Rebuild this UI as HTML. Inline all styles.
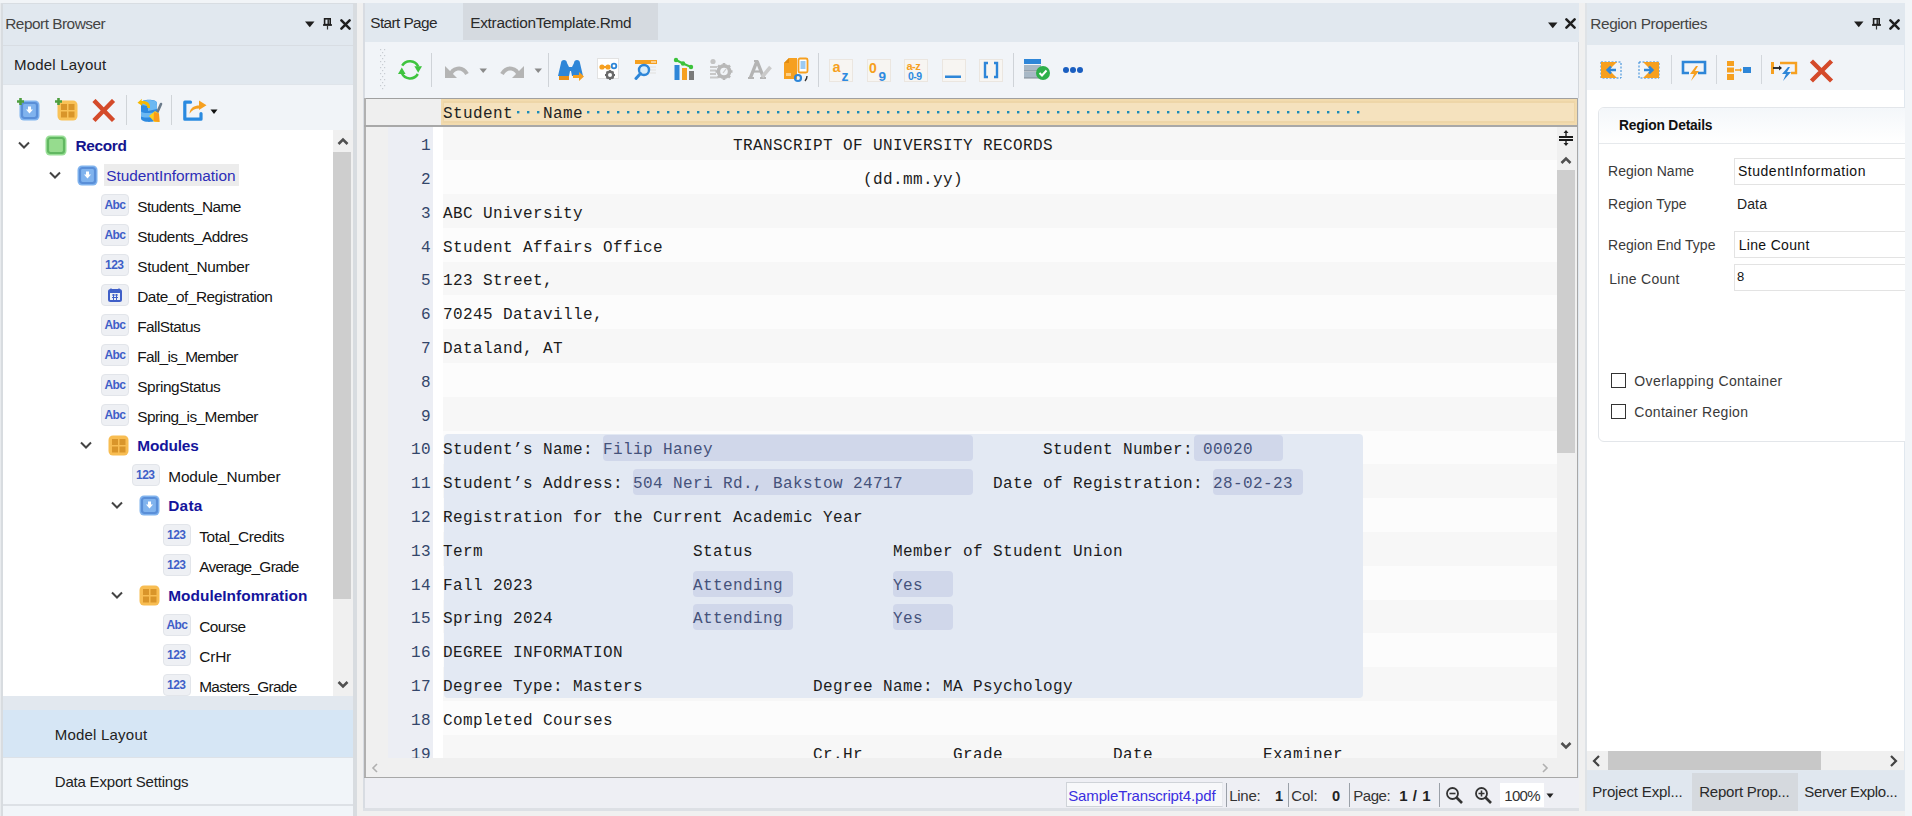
<!DOCTYPE html><html><head><meta charset="utf-8"><style>
html,body{margin:0;padding:0;}
body{width:1912px;height:816px;position:relative;overflow:hidden;background:#f0f0f0;font-family:"Liberation Sans", sans-serif;}
.t{position:absolute;white-space:pre;line-height:1;}
</style></head><body>
<div style="position:absolute;left:0px;top:0px;width:1912px;height:3px;background:#f1f4f7;"></div>
<div style="position:absolute;left:1905px;top:0px;width:7px;height:816px;background:#f2f5f8;"></div>
<div style="position:absolute;left:0px;top:3px;width:357px;height:813px;background:#e1e8ef;"></div>
<div style="position:absolute;left:0px;top:3px;width:1px;height:813px;background:#e8ebee;"></div>
<div style="position:absolute;left:1px;top:3px;width:2px;height:813px;background:#d8dce0;"></div>
<div style="position:absolute;left:1px;top:3px;width:356px;height:1px;background:#d8dde2;"></div>
<div class="t" style="left:5.23px;top:15.76px;font-size:15.4px;color:#444;font-weight:400;font-family:'Liberation Sans', sans-serif;letter-spacing:-0.495px;">Report Browser</div>
<svg style="position:absolute;left:305px;top:21px;" width="10" height="7" viewBox="0 0 10 7"><path d="M0 0.5 H9.5 L4.75 6.2Z" fill="#1e1e1e"/></svg>
<svg style="position:absolute;left:322.5px;top:17.5px;" width="10" height="12" viewBox="0 0 10 12"><rect x="1.6" y="0.8" width="5.6" height="5.8" fill="none" stroke="#1e1e1e" stroke-width="1.6"/><path d="M5.2 1.2 V6.5" stroke="#1e1e1e" stroke-width="1.4"/><path d="M0 7 H9" stroke="#1e1e1e" stroke-width="1.6"/><path d="M4.5 7.5 V11.5" stroke="#333" stroke-width="1.2"/></svg>
<svg style="position:absolute;left:340px;top:18.5px;" width="11" height="11" viewBox="0 0 11 11"><path d="M1.4 1.4 L9.6 9.6 M9.6 1.4 L1.4 9.6" stroke="#1e1e1e" stroke-width="2.5" stroke-linecap="round"/></svg>
<div style="position:absolute;left:3px;top:45px;width:350px;height:1px;background:#d8dde3;"></div>
<div class="t" style="left:13.95px;top:57.30px;font-size:15px;color:#222;font-weight:400;font-family:'Liberation Sans', sans-serif;letter-spacing:0.199px;">Model Layout</div>
<div style="position:absolute;left:3px;top:84px;width:350px;height:1px;background:#dfe4ea;"></div>
<div style="position:absolute;left:3px;top:85px;width:350px;height:45px;background:#f1f4f8;"></div>
<svg style="position:absolute;left:16px;top:97px;" width="26" height="26" viewBox="0 0 26 26">
<rect x="3.5" y="3.5" width="20" height="20" rx="4.5" fill="#80b3ee"/>
<rect x="6" y="6" width="15" height="15" rx="2.5" fill="#80b3ee" stroke="#5a8fd8" stroke-width="2.2"/>
<path d="M12 9.5 H15 V12.5 H17 L13.5 16.5 L10 12.5 H12Z" fill="#fff"/>
<path d="M4.5 1 V8 M1 4.5 H8" stroke="#4e9e3e" stroke-width="2.6"/>
</svg>
<svg style="position:absolute;left:54px;top:97px;" width="26" height="26" viewBox="0 0 26 26">
<rect x="3.5" y="3.5" width="20" height="20" rx="4.5" fill="#f9c258"/>
<rect x="7" y="7" width="6" height="6" fill="#d9952a"/><rect x="14.5" y="7" width="6" height="6" fill="#d9952a"/>
<rect x="7" y="14.5" width="6" height="6" fill="#d9952a"/><rect x="14.5" y="14.5" width="6" height="6" fill="#d9952a"/>
<path d="M4.5 1 V8 M1 4.5 H8" stroke="#4e9e3e" stroke-width="2.6"/>
</svg>
<svg style="position:absolute;left:92px;top:99px;" width="24" height="24" viewBox="0 0 24 24"><path d="M3.5 3 L20 20 M20 3 L3.5 20" stroke="#d44a2a" stroke-width="4.4" stroke-linecap="square"/></svg>
<div style="position:absolute;left:126px;top:95px;width:1px;height:30px;background:#d0d4d8;"></div>
<svg style="position:absolute;left:135px;top:98px;" width="28" height="26" viewBox="0 0 28 26">
<path d="M6 5 C6 0.5 22 0.5 22 5 V20.5 C22 25 6 25 6 20.5Z" fill="#2e8ae0"/>
<path d="M6 5 C6 9 22 9 22 5 C22 1 6 1 6 5Z" fill="#6cb8f2"/>
<path d="M13 7.5 L22 6 V11 L13 13Z M6 13.5 C9 15.5 13 15.5 22 14 V18 C13 20 9 20 6 18.5Z" fill="#6cb8f2"/>
<path d="M2.5 10 C2 5 6 2.5 11 3 L10.5 0.8 L15 4.8 L10 8 L10.5 5.8 C7 5.8 5 7.5 5.2 10Z" fill="#f5b800" transform="translate(17.5,0) scale(-1,1)"/>
<path d="M26 6 L22 15" stroke="#6a7a8a" stroke-width="2.6" stroke-linecap="round"/>
<path d="M14 18 L20 13 L24 15.5 L24.5 24 L19.5 24Z" fill="#fbd020"/><path d="M19 14 L24 15.5 L24.5 24 L18.5 23Z" fill="#f89a1c"/>
</svg>
<div style="position:absolute;left:171px;top:95px;width:1px;height:30px;background:#d0d4d8;"></div>
<svg style="position:absolute;left:182px;top:98px;" width="28" height="26" viewBox="0 0 28 26">
<path d="M8.5 4.2 H2.8 V21.2 H19 V15.5" stroke="#2a8ae0" stroke-width="3.2" fill="none" stroke-linejoin="round" stroke-linecap="round"/>
<path d="M7.5 15.8 C8 9.5 12.5 7.5 17 7.5 V2.5 L24.5 7.2 L17 12 V10.4 C13 10.4 9.8 12 7.5 15.8Z" fill="#f6a020"/>
</svg>
<svg style="position:absolute;left:210px;top:109px;" width="8" height="6" viewBox="0 0 8 6"><path d="M0.5 0.5 H7.5 L4 5Z" fill="#111"/></svg>
<div style="position:absolute;left:3px;top:130px;width:350px;height:566px;background:#ffffff;"></div>
<div style="position:absolute;left:333px;top:130px;width:20px;height:566px;background:#f0f0f0;"></div>
<div style="position:absolute;left:333px;top:152px;width:18px;height:447px;background:#cecece;"></div>
<svg style="position:absolute;left:336px;top:136px;" width="14" height="10" viewBox="0 0 14 10"><path d="M2.5 8 L7 3.5 L11.5 8" stroke="#505050" stroke-width="2.6" fill="none"/></svg>
<svg style="position:absolute;left:336px;top:680px;" width="14" height="10" viewBox="0 0 14 10"><path d="M2.5 2 L7 6.5 L11.5 2" stroke="#505050" stroke-width="2.6" fill="none"/></svg>
<div style="position:absolute;left:4px;top:130px;width:329px;height:566px;overflow:hidden">
<svg style="position:absolute;left:14px;top:11px;" width="12" height="8" viewBox="0 0 12 8"><path d="M1 1.5 L6 6.5 L11 1.5" stroke="#444" stroke-width="2" fill="none"/></svg>
<svg style="position:absolute;left:41px;top:5px;" width="22" height="21" viewBox="0 0 22 21"><rect x="0.5" y="0.5" width="21" height="20" rx="4.5" fill="#98de96"/><rect x="3" y="3" width="16" height="15" rx="2.5" fill="#96dc8e" stroke="#62b862" stroke-width="2.2"/></svg>
<div class="t" style="left:71.43px;top:8.36px;font-size:15.4px;color:#14148e;font-weight:700;font-family:'Liberation Sans', sans-serif;letter-spacing:-0.329px;">Record</div>
<svg style="position:absolute;left:45px;top:41px;" width="12" height="8" viewBox="0 0 12 8"><path d="M1 1.5 L6 6.5 L11 1.5" stroke="#444" stroke-width="2" fill="none"/></svg>
<svg style="position:absolute;left:73px;top:35px;" width="21" height="21" viewBox="0 0 21 21"><rect x="0.5" y="0.5" width="20" height="20" rx="4.5" fill="#80b3ee"/><rect x="3" y="3" width="15" height="15" rx="2.5" fill="#80b3ee" stroke="#5a8fd8" stroke-width="2.2"/><path d="M9 6.5 H12 V9.5 H14 L10.5 13.5 L7 9.5 H9Z" fill="#fff"/></svg>
<div style="position:absolute;left:100px;top:34px;width:135px;height:22px;background:#ececec;"></div>
<div class="t" style="left:102.23px;top:38.36px;font-size:15.4px;color:#2e2eb8;font-weight:400;font-family:'Liberation Sans', sans-serif;letter-spacing:-0.045px;">StudentInformation</div>
<div style="position:absolute;left:97px;top:64px;width:28px;height:22px;background:#eef0f4;border:1px solid #e2e5ea;border-radius:4px;box-sizing:border-box;"></div><div class="t" style="left:100.50px;top:69.34px;font-size:12px;color:#3f5fc8;font-weight:700;font-family:'Liberation Sans', sans-serif;letter-spacing:-0.6px">Abc</div>
<div class="t" style="left:133.23px;top:68.76px;font-size:15.4px;color:#141414;font-weight:400;font-family:'Liberation Sans', sans-serif;letter-spacing:-0.516px;">Students_Name</div>
<div style="position:absolute;left:97px;top:94px;width:28px;height:22px;background:#eef0f4;border:1px solid #e2e5ea;border-radius:4px;box-sizing:border-box;"></div><div class="t" style="left:100.50px;top:99.34px;font-size:12px;color:#3f5fc8;font-weight:700;font-family:'Liberation Sans', sans-serif;letter-spacing:-0.6px">Abc</div>
<div class="t" style="left:133.23px;top:98.76px;font-size:15.4px;color:#141414;font-weight:400;font-family:'Liberation Sans', sans-serif;letter-spacing:-0.507px;">Students_Addres</div>
<div style="position:absolute;left:97px;top:124px;width:28px;height:22px;background:#eef0f4;border:1px solid #e2e5ea;border-radius:4px;box-sizing:border-box;"></div><div class="t" style="left:101.00px;top:129.34px;font-size:12px;color:#3f5fc8;font-weight:700;font-family:'Liberation Sans', sans-serif;letter-spacing:-0.5px">123</div>
<div class="t" style="left:133.23px;top:128.76px;font-size:15.4px;color:#141414;font-weight:400;font-family:'Liberation Sans', sans-serif;letter-spacing:-0.306px;">Student_Number</div>
<div style="position:absolute;left:97px;top:154px;width:28px;height:22px;background:#eef0f4;border:1px solid #e2e5ea;border-radius:4px;box-sizing:border-box;"></div><svg style="position:absolute;left:104px;top:158px;" width="14" height="14" viewBox="0 0 14 14"><rect x="1" y="2" width="12" height="11" rx="1.5" fill="none" stroke="#3f5fc8" stroke-width="2"/><rect x="1" y="2" width="12" height="3" fill="#3f5fc8"/><path d="M3 0.5 V3 M11 0.5 V3" stroke="#3f5fc8" stroke-width="1.5"/><path d="M4 7 H10 M4 9.5 H10 M5.5 6 V12 M8.5 6 V12" stroke="#3f5fc8" stroke-width="1"/></svg>
<div class="t" style="left:133.23px;top:158.76px;font-size:15.4px;color:#141414;font-weight:400;font-family:'Liberation Sans', sans-serif;letter-spacing:-0.474px;">Date_of_Registration</div>
<div style="position:absolute;left:97px;top:184px;width:28px;height:22px;background:#eef0f4;border:1px solid #e2e5ea;border-radius:4px;box-sizing:border-box;"></div><div class="t" style="left:100.50px;top:189.34px;font-size:12px;color:#3f5fc8;font-weight:700;font-family:'Liberation Sans', sans-serif;letter-spacing:-0.6px">Abc</div>
<div class="t" style="left:133.23px;top:188.76px;font-size:15.4px;color:#141414;font-weight:400;font-family:'Liberation Sans', sans-serif;letter-spacing:-0.539px;">FallStatus</div>
<div style="position:absolute;left:97px;top:214px;width:28px;height:22px;background:#eef0f4;border:1px solid #e2e5ea;border-radius:4px;box-sizing:border-box;"></div><div class="t" style="left:100.50px;top:219.34px;font-size:12px;color:#3f5fc8;font-weight:700;font-family:'Liberation Sans', sans-serif;letter-spacing:-0.6px">Abc</div>
<div class="t" style="left:133.23px;top:218.76px;font-size:15.4px;color:#141414;font-weight:400;font-family:'Liberation Sans', sans-serif;letter-spacing:-0.638px;">Fall_is_Member</div>
<div style="position:absolute;left:97px;top:244px;width:28px;height:22px;background:#eef0f4;border:1px solid #e2e5ea;border-radius:4px;box-sizing:border-box;"></div><div class="t" style="left:100.50px;top:249.34px;font-size:12px;color:#3f5fc8;font-weight:700;font-family:'Liberation Sans', sans-serif;letter-spacing:-0.6px">Abc</div>
<div class="t" style="left:133.23px;top:248.76px;font-size:15.4px;color:#141414;font-weight:400;font-family:'Liberation Sans', sans-serif;letter-spacing:-0.413px;">SpringStatus</div>
<div style="position:absolute;left:97px;top:274px;width:28px;height:22px;background:#eef0f4;border:1px solid #e2e5ea;border-radius:4px;box-sizing:border-box;"></div><div class="t" style="left:100.50px;top:279.34px;font-size:12px;color:#3f5fc8;font-weight:700;font-family:'Liberation Sans', sans-serif;letter-spacing:-0.6px">Abc</div>
<div class="t" style="left:133.23px;top:278.76px;font-size:15.4px;color:#141414;font-weight:400;font-family:'Liberation Sans', sans-serif;letter-spacing:-0.532px;">Spring_is_Member</div>
<svg style="position:absolute;left:76px;top:311px;" width="12" height="8" viewBox="0 0 12 8"><path d="M1 1.5 L6 6.5 L11 1.5" stroke="#444" stroke-width="2" fill="none"/></svg>
<svg style="position:absolute;left:104px;top:305px;" width="21" height="21" viewBox="0 0 21 21"><rect x="0.5" y="0.5" width="20" height="20" rx="4.5" fill="#f8bd52"/><rect x="4" y="4" width="6" height="6" fill="#d9952a"/><rect x="11.5" y="4" width="6" height="6" fill="#d9952a"/><rect x="4" y="11.5" width="6" height="6" fill="#d9952a"/><rect x="11.5" y="11.5" width="6" height="6" fill="#d9952a"/></svg>
<div class="t" style="left:133.23px;top:308.36px;font-size:15.4px;color:#14149c;font-weight:700;font-family:'Liberation Sans', sans-serif;letter-spacing:-0.139px;">Modules</div>
<div style="position:absolute;left:128px;top:334px;width:28px;height:22px;background:#eef0f4;border:1px solid #e2e5ea;border-radius:4px;box-sizing:border-box;"></div><div class="t" style="left:132.00px;top:339.34px;font-size:12px;color:#3f5fc8;font-weight:700;font-family:'Liberation Sans', sans-serif;letter-spacing:-0.5px">123</div>
<div class="t" style="left:164.23px;top:338.76px;font-size:15.4px;color:#141414;font-weight:400;font-family:'Liberation Sans', sans-serif;letter-spacing:-0.116px;">Module_Number</div>
<svg style="position:absolute;left:107px;top:371px;" width="12" height="8" viewBox="0 0 12 8"><path d="M1 1.5 L6 6.5 L11 1.5" stroke="#444" stroke-width="2" fill="none"/></svg>
<svg style="position:absolute;left:135px;top:365px;" width="21" height="21" viewBox="0 0 21 21"><rect x="0.5" y="0.5" width="20" height="20" rx="4.5" fill="#80b3ee"/><rect x="3" y="3" width="15" height="15" rx="2.5" fill="#80b3ee" stroke="#5a8fd8" stroke-width="2.2"/><path d="M9 6.5 H12 V9.5 H14 L10.5 13.5 L7 9.5 H9Z" fill="#fff"/></svg>
<div class="t" style="left:164.23px;top:368.36px;font-size:15.4px;color:#14149c;font-weight:700;font-family:'Liberation Sans', sans-serif;letter-spacing:0.276px;">Data</div>
<div style="position:absolute;left:159px;top:394px;width:28px;height:22px;background:#eef0f4;border:1px solid #e2e5ea;border-radius:4px;box-sizing:border-box;"></div><div class="t" style="left:163.00px;top:399.34px;font-size:12px;color:#3f5fc8;font-weight:700;font-family:'Liberation Sans', sans-serif;letter-spacing:-0.5px">123</div>
<div class="t" style="left:195.23px;top:398.76px;font-size:15.4px;color:#141414;font-weight:400;font-family:'Liberation Sans', sans-serif;letter-spacing:-0.379px;">Total_Credits</div>
<div style="position:absolute;left:159px;top:424px;width:28px;height:22px;background:#eef0f4;border:1px solid #e2e5ea;border-radius:4px;box-sizing:border-box;"></div><div class="t" style="left:163.00px;top:429.34px;font-size:12px;color:#3f5fc8;font-weight:700;font-family:'Liberation Sans', sans-serif;letter-spacing:-0.5px">123</div>
<div class="t" style="left:195.23px;top:428.76px;font-size:15.4px;color:#141414;font-weight:400;font-family:'Liberation Sans', sans-serif;letter-spacing:-0.684px;">Average_Grade</div>
<svg style="position:absolute;left:107px;top:461px;" width="12" height="8" viewBox="0 0 12 8"><path d="M1 1.5 L6 6.5 L11 1.5" stroke="#444" stroke-width="2" fill="none"/></svg>
<svg style="position:absolute;left:135px;top:455px;" width="21" height="21" viewBox="0 0 21 21"><rect x="0.5" y="0.5" width="20" height="20" rx="4.5" fill="#f8bd52"/><rect x="4" y="4" width="6" height="6" fill="#d9952a"/><rect x="11.5" y="4" width="6" height="6" fill="#d9952a"/><rect x="4" y="11.5" width="6" height="6" fill="#d9952a"/><rect x="11.5" y="11.5" width="6" height="6" fill="#d9952a"/></svg>
<div class="t" style="left:164.23px;top:458.36px;font-size:15.4px;color:#14149c;font-weight:700;font-family:'Liberation Sans', sans-serif;letter-spacing:0.036px;">ModuleInfomration</div>
<div style="position:absolute;left:159px;top:484px;width:28px;height:22px;background:#eef0f4;border:1px solid #e2e5ea;border-radius:4px;box-sizing:border-box;"></div><div class="t" style="left:162.50px;top:489.34px;font-size:12px;color:#3f5fc8;font-weight:700;font-family:'Liberation Sans', sans-serif;letter-spacing:-0.6px">Abc</div>
<div class="t" style="left:195.23px;top:488.76px;font-size:15.4px;color:#141414;font-weight:400;font-family:'Liberation Sans', sans-serif;letter-spacing:-0.568px;">Course</div>
<div style="position:absolute;left:159px;top:514px;width:28px;height:22px;background:#eef0f4;border:1px solid #e2e5ea;border-radius:4px;box-sizing:border-box;"></div><div class="t" style="left:163.00px;top:519.34px;font-size:12px;color:#3f5fc8;font-weight:700;font-family:'Liberation Sans', sans-serif;letter-spacing:-0.5px">123</div>
<div class="t" style="left:195.23px;top:518.76px;font-size:15.4px;color:#141414;font-weight:400;font-family:'Liberation Sans', sans-serif;letter-spacing:-0.166px;">CrHr</div>
<div style="position:absolute;left:159px;top:544px;width:28px;height:22px;background:#eef0f4;border:1px solid #e2e5ea;border-radius:4px;box-sizing:border-box;"></div><div class="t" style="left:163.00px;top:549.34px;font-size:12px;color:#3f5fc8;font-weight:700;font-family:'Liberation Sans', sans-serif;letter-spacing:-0.5px">123</div>
<div class="t" style="left:195.23px;top:548.76px;font-size:15.4px;color:#141414;font-weight:400;font-family:'Liberation Sans', sans-serif;letter-spacing:-0.666px;">Masters_Grade</div>
</div>
<div style="position:absolute;left:3px;top:696px;width:350px;height:14px;background:#e2e8ef;"></div>
<div style="position:absolute;left:3px;top:710px;width:350px;height:47px;background:#d6e6f5;"></div>
<div class="t" style="left:54.75px;top:726.50px;font-size:15px;color:#222;font-weight:400;font-family:'Liberation Sans', sans-serif;letter-spacing:0.208px;">Model Layout</div>
<div style="position:absolute;left:3px;top:757px;width:350px;height:1px;background:#dde2e8;"></div>
<div style="position:absolute;left:3px;top:758px;width:350px;height:46px;background:#f1f5f9;"></div>
<div class="t" style="left:54.75px;top:774.10px;font-size:15px;color:#222;font-weight:400;font-family:'Liberation Sans', sans-serif;letter-spacing:-0.196px;">Data Export Settings</div>
<div style="position:absolute;left:3px;top:804px;width:350px;height:2px;background:#dde1e6;"></div>
<div style="position:absolute;left:3px;top:806px;width:350px;height:10px;background:#f1f5f9;"></div>
<div style="position:absolute;left:353px;top:3px;width:4px;height:813px;background:#d8dce0;"></div>
<div style="position:absolute;left:363px;top:3px;width:1216px;height:808px;background:#e1e8ef;"></div>
<div style="position:absolute;left:363px;top:3px;width:2px;height:808px;background:#d8dce2;"></div>
<div style="position:absolute;left:463px;top:3px;width:195px;height:37px;background:#d5dae0;"></div>
<div class="t" style="left:370.23px;top:14.76px;font-size:15.4px;color:#2a2a2a;font-weight:400;font-family:'Liberation Sans', sans-serif;letter-spacing:-0.594px;">Start Page</div>
<div class="t" style="left:470.23px;top:14.76px;font-size:15.4px;color:#2a2a2a;font-weight:400;font-family:'Liberation Sans', sans-serif;letter-spacing:-0.299px;">ExtractionTemplate.Rmd</div>
<svg style="position:absolute;left:1547.5px;top:21.5px;" width="10" height="7" viewBox="0 0 10 7"><path d="M0 0.5 H9.5 L4.75 6.2Z" fill="#1e1e1e"/></svg>
<svg style="position:absolute;left:1565px;top:17.5px;" width="11" height="11" viewBox="0 0 11 11"><path d="M1.4 1.4 L9.6 9.6 M9.6 1.4 L1.4 9.6" stroke="#1e1e1e" stroke-width="2.5" stroke-linecap="round"/></svg>
<div style="position:absolute;left:365px;top:42px;width:1213px;height:56px;background:#f1f4f8;"></div>
<div style="position:absolute;left:1578px;top:42px;width:1px;height:56px;background:#d3d7dc;"></div>
<svg style="position:absolute;left:379px;top:49px;" width="8" height="42" viewBox="0 0 8 42"><rect x="1" y="0" width="1.2" height="1.2" fill="#c8ccd2"/><rect x="5" y="0" width="1.2" height="1.2" fill="#c8ccd2"/><rect x="3" y="3" width="1.2" height="1.2" fill="#c8ccd2"/><rect x="1" y="6" width="1.2" height="1.2" fill="#c8ccd2"/><rect x="5" y="6" width="1.2" height="1.2" fill="#c8ccd2"/><rect x="3" y="9" width="1.2" height="1.2" fill="#c8ccd2"/><rect x="1" y="12" width="1.2" height="1.2" fill="#c8ccd2"/><rect x="5" y="12" width="1.2" height="1.2" fill="#c8ccd2"/><rect x="3" y="15" width="1.2" height="1.2" fill="#c8ccd2"/><rect x="1" y="18" width="1.2" height="1.2" fill="#c8ccd2"/><rect x="5" y="18" width="1.2" height="1.2" fill="#c8ccd2"/><rect x="3" y="21" width="1.2" height="1.2" fill="#c8ccd2"/><rect x="1" y="24" width="1.2" height="1.2" fill="#c8ccd2"/><rect x="5" y="24" width="1.2" height="1.2" fill="#c8ccd2"/><rect x="3" y="27" width="1.2" height="1.2" fill="#c8ccd2"/><rect x="1" y="30" width="1.2" height="1.2" fill="#c8ccd2"/><rect x="5" y="30" width="1.2" height="1.2" fill="#c8ccd2"/><rect x="3" y="33" width="1.2" height="1.2" fill="#c8ccd2"/><rect x="1" y="36" width="1.2" height="1.2" fill="#c8ccd2"/><rect x="5" y="36" width="1.2" height="1.2" fill="#c8ccd2"/><rect x="3" y="39" width="1.2" height="1.2" fill="#c8ccd2"/></svg>
<svg style="position:absolute;left:392px;top:52px;" width="40" height="36" viewBox="0 0 40 36">
<path d="M10.2 13.6 A9 9 0 0 1 26.2 14.6" stroke="#3ec43e" stroke-width="2.5" fill="none"/>
<path d="M22.4 14.2 L30 14.2 L26.2 20.8Z" fill="#3ec43e"/>
<path d="M25.8 22 A9 9 0 0 1 9.8 21" stroke="#3ec43e" stroke-width="2.5" fill="none"/>
<path d="M6 22 L13.6 22 L9.8 15.4Z" fill="#3ec43e"/>
</svg>
<div style="position:absolute;left:431px;top:53px;width:1px;height:34px;background:#cfd3d8;"></div>
<svg style="position:absolute;left:444px;top:62px;" width="26" height="18" viewBox="0 0 26 18"><path d="M6 14 C8 6 18 3 23 12" stroke="#b4b4b4" stroke-width="4" fill="none"/><path d="M1 4 V16 H13Z" fill="#b4b4b4"/></svg>
<svg style="position:absolute;left:479px;top:68px;" width="9" height="6" viewBox="0 0 9 6"><path d="M0.5 0.5 H8 L4.2 5Z" fill="#8a8a8a"/></svg>
<svg style="position:absolute;left:499px;top:62px;" width="26" height="18" viewBox="0 0 26 18"><path d="M20 14 C18 6 8 3 3 12" stroke="#b4b4b4" stroke-width="4" fill="none"/><path d="M25 4 V16 H13Z" fill="#b4b4b4"/></svg>
<svg style="position:absolute;left:534px;top:68px;" width="9" height="6" viewBox="0 0 9 6"><path d="M0.5 0.5 H8 L4.2 5Z" fill="#8a8a8a"/></svg>
<div style="position:absolute;left:548px;top:53px;width:1px;height:34px;background:#cfd3d8;"></div>
<svg style="position:absolute;left:558px;top:57px;" width="28" height="25" viewBox="0 0 28 25">
<path d="M3 6 C3 2 9 2 9 6 L11 10 H14 L16 6 C16 2 22 2 22 6 L25 19 H14 L13 14 H12 L11 19 H0Z" fill="#2e86d8"/>
<rect x="1" y="19" width="10" height="4" fill="#e8901a"/>
<path d="M15 18 H21 V15 L26 19.5 L21 24 V21 H15Z" fill="#f6a020"/>
</svg>
<svg style="position:absolute;left:597px;top:58px;" width="24" height="24" viewBox="0 0 24 24">
<rect x="0.5" y="0.5" width="21" height="20" fill="#fff" stroke="#e2e2e2"/>
<circle cx="5" cy="9" r="2.6" fill="#f6a020"/><circle cx="11" cy="9" r="2.6" fill="#f6a020"/><path d="M5 9 H11" stroke="#f6a020" stroke-width="2"/>
<circle cx="17" cy="8" r="2.3" fill="none" stroke="#2e86d8" stroke-width="1.8"/>
<circle cx="13" cy="17" r="3.2" fill="none" stroke="#6a6a6a" stroke-width="2.4"/>
<path d="M13 12 V13.5 M13 20.5 V22 M8 17 H9.5 M16.5 17 H18 M9.5 13.5 L10.5 14.5 M15.5 19.5 L16.5 20.5 M16.5 13.5 L15.5 14.5 M9.5 20.5 L10.5 19.5" stroke="#6a6a6a" stroke-width="1.8"/>
</svg>
<svg style="position:absolute;left:634px;top:58px;" width="26" height="24" viewBox="0 0 26 24">
<rect x="1" y="2" width="22" height="4" fill="#f6a020"/>
<path d="M17 4 H22" stroke="#fff" stroke-width="1"/>
<path d="M13 9 H22 M15 12 H22 M15 15 H22" stroke="#e6e6e6" stroke-width="1.5"/>
<circle cx="10" cy="12" r="5" fill="#d8ecfa" stroke="#2e86d8" stroke-width="2.4"/>
<path d="M6.5 15.5 L2 20.5" stroke="#2e86d8" stroke-width="3" stroke-linecap="round"/>
</svg>
<svg style="position:absolute;left:673px;top:57px;" width="24" height="25" viewBox="0 0 24 25">
<rect x="1.5" y="8" width="5" height="15" fill="#2e86d8"/>
<rect x="9" y="11" width="5" height="12" fill="#f6a020"/>
<rect x="16" y="14" width="5" height="9" fill="#7a7a7a"/>
<path d="M3 3 L10 6.5 L18 10" stroke="#3cc23c" stroke-width="2" fill="none"/>
<circle cx="3" cy="3" r="2.2" fill="#3cc23c"/><circle cx="10" cy="6.5" r="2.2" fill="#3cc23c"/><circle cx="18" cy="10" r="2.2" fill="#3cc23c"/>
</svg>
<svg style="position:absolute;left:708px;top:57px;" width="26" height="25" viewBox="0 0 26 25">
<circle cx="5" cy="4.5" r="2.6" fill="#c4c4c4"/>
<path d="M2 10 H9 M2 13.5 H8 M2 17 H8 M2 20.5 H10" stroke="#c8c8c8" stroke-width="2"/>
<circle cx="16" cy="14.5" r="5.6" fill="none" stroke="#b8b8b8" stroke-width="3.6"/>
<path d="M16 6 V9 M16 20 V23 M7.5 14.5 H10.5 M21.5 14.5 H24.5 M10 8.5 L12 10.5 M20 18.5 L22 20.5 M22 8.5 L20 10.5 M10 20.5 L12 18.5" stroke="#b8b8b8" stroke-width="2.6"/>
<path d="M15 16 L18 12" stroke="#c8c8c8" stroke-width="1.2"/>
</svg>
<svg style="position:absolute;left:747px;top:58px;" width="28" height="24" viewBox="0 0 28 24">
<path d="M3.5 19.5 L10 3 L16.5 19.5" stroke="#b4b4b4" stroke-width="3.4" fill="none" stroke-linejoin="bevel"/>
<path d="M6.5 13.5 H13.5" stroke="#b4b4b4" stroke-width="2.2"/>
<path d="M1 20 H7 M13 20 H19 M7 3 H11" stroke="#b4b4b4" stroke-width="2"/>
<path d="M15 19 L23.5 9" stroke="#cacaca" stroke-width="3.6"/>
</svg>
<svg style="position:absolute;left:783px;top:57px;" width="28" height="26" viewBox="0 0 28 26">
<path d="M6 1 H14 V22 H1 V6Z" fill="#f6a020"/>
<path d="M1 6 L6 1 V6Z" fill="#e08a10"/>
<rect x="3" y="16" width="5" height="3" fill="#fbd08a"/>
<rect x="15.5" y="1.5" width="9" height="14" rx="1.5" fill="#fff" stroke="#f6a020" stroke-width="1.8"/>
<rect x="17.5" y="4" width="5" height="8" fill="#9ccaf2"/>
<circle cx="15" cy="21" r="3" fill="none" stroke="#2e86d8" stroke-width="2.2"/>
<path d="M22 24 C24 22 24 20 24 19" stroke="#333" stroke-width="1.4" fill="none"/>
</svg>
<div style="position:absolute;left:818px;top:53px;width:1px;height:34px;background:#cfd3d8;"></div>
<svg style="position:absolute;left:829px;top:59px;" width="24" height="23" viewBox="0 0 24 23"><rect x="0.5" y="0.5" width="23" height="22" fill="#f7f5f2" stroke="#ebe6e0"/><text x="3.5" y="13" font-family="Liberation Sans" font-weight="700" font-size="14.5" fill="#f6a020">a</text><text x="12.5" y="21.5" font-family="Liberation Sans" font-weight="700" font-size="14" fill="#2e8ae0">z</text></svg>
<svg style="position:absolute;left:867px;top:59px;" width="24" height="23" viewBox="0 0 24 23"><rect x="0.5" y="0.5" width="23" height="22" fill="#f7f5f2" stroke="#ebe6e0"/><text x="2" y="14" font-family="Liberation Sans" font-weight="700" font-size="14" fill="#f6a020">0</text><text x="11.5" y="22" font-family="Liberation Sans" font-weight="700" font-size="13.5" fill="#2e8ae0">9</text></svg>
<svg style="position:absolute;left:904px;top:59px;" width="24" height="23" viewBox="0 0 24 23"><rect x="0.5" y="0.5" width="23" height="22" fill="#f7f5f2" stroke="#ebe6e0"/><text x="2.5" y="11" font-family="Liberation Sans" font-weight="700" font-size="11" fill="#f6a020" letter-spacing="-0.5">a-z</text><text x="4" y="21" font-family="Liberation Sans" font-weight="700" font-size="10.5" fill="#2e8ae0" letter-spacing="-0.6">0-9</text></svg>
<svg style="position:absolute;left:942px;top:59px;" width="24" height="23" viewBox="0 0 24 23"><rect x="0.5" y="0.5" width="23" height="22" fill="#f7f5f2" stroke="#ebe6e0"/><rect x="3" y="16.5" width="16" height="2.5" fill="#2e86d8"/></svg>
<svg style="position:absolute;left:979px;top:59px;" width="24" height="23" viewBox="0 0 24 23"><rect x="0.5" y="0.5" width="23" height="22" fill="#f7f5f2" stroke="#ebe6e0"/><path d="M9 4 H6 V18 H9 M15 4 H18 V18 H15" stroke="#2e86d8" stroke-width="2.4" fill="none"/></svg>
<div style="position:absolute;left:1013px;top:53px;width:1px;height:34px;background:#cfd3d8;"></div>
<svg style="position:absolute;left:1023px;top:58px;" width="28" height="24" viewBox="0 0 28 24">
<rect x="1" y="1" width="17" height="5" fill="#2e86d8"/>
<rect x="1" y="7" width="17" height="6" fill="#a8b8c6"/>
<rect x="1" y="14" width="17" height="6" fill="#a8b8c6"/>
<path d="M1 13 H18 M1 20 H18" stroke="#808a94" stroke-width="1"/>
<circle cx="20" cy="15" r="7" fill="#2eb04a"/>
<path d="M16.5 15 L19 17.5 L23.5 12.5" stroke="#fff" stroke-width="2" fill="none"/>
</svg>
<svg style="position:absolute;left:1062px;top:66px;" width="24" height="8" viewBox="0 0 24 8"><circle cx="4" cy="4" r="3" fill="#1a5ec0"/><circle cx="11" cy="4" r="3" fill="#1a5ec0"/><circle cx="18" cy="4" r="3" fill="#1a5ec0"/></svg>
<div style="position:absolute;left:364px;top:98px;width:1214px;height:1px;background:#a0a0a0;"></div>
<div style="position:absolute;left:364px;top:98px;width:2px;height:680px;background:#b0b0b0;"></div>
<div style="position:absolute;left:366px;top:99px;width:1211px;height:27px;background:#efefef;"></div>
<div style="position:absolute;left:441px;top:99px;width:1136px;height:26px;background:#f2dbae;"></div>
<div style="position:absolute;left:443px;top:101px;width:1132px;height:22px;background:#eed6a8;"></div>
<div style="position:absolute;left:444px;top:103px;width:1130px;height:18px;background:#f5e2be;"></div>
<div style="position:absolute;left:364px;top:125px;width:1214px;height:2px;background:#a8a8a8;"></div>
<div class="t" style="left:443.00px;top:105.74px;font-size:16px;color:#222;font-weight:400;font-family:'Liberation Mono', monospace;letter-spacing:0.4px">Student</div>
<svg style="position:absolute;left:443px;top:111px;" width="920" height="3" viewBox="0 0 920 3"><rect x="74" y="0" width="2.4" height="2.4" fill="#1c8cb8"/><rect x="84" y="0" width="2.4" height="2.4" fill="#1c8cb8"/><rect x="94" y="0" width="2.4" height="2.4" fill="#1c8cb8"/><rect x="144" y="0" width="2.4" height="2.4" fill="#1c8cb8"/><rect x="154" y="0" width="2.4" height="2.4" fill="#1c8cb8"/><rect x="164" y="0" width="2.4" height="2.4" fill="#1c8cb8"/><rect x="174" y="0" width="2.4" height="2.4" fill="#1c8cb8"/><rect x="184" y="0" width="2.4" height="2.4" fill="#1c8cb8"/><rect x="194" y="0" width="2.4" height="2.4" fill="#1c8cb8"/><rect x="204" y="0" width="2.4" height="2.4" fill="#1c8cb8"/><rect x="214" y="0" width="2.4" height="2.4" fill="#1c8cb8"/><rect x="224" y="0" width="2.4" height="2.4" fill="#1c8cb8"/><rect x="234" y="0" width="2.4" height="2.4" fill="#1c8cb8"/><rect x="244" y="0" width="2.4" height="2.4" fill="#1c8cb8"/><rect x="254" y="0" width="2.4" height="2.4" fill="#1c8cb8"/><rect x="264" y="0" width="2.4" height="2.4" fill="#1c8cb8"/><rect x="274" y="0" width="2.4" height="2.4" fill="#1c8cb8"/><rect x="284" y="0" width="2.4" height="2.4" fill="#1c8cb8"/><rect x="294" y="0" width="2.4" height="2.4" fill="#1c8cb8"/><rect x="304" y="0" width="2.4" height="2.4" fill="#1c8cb8"/><rect x="314" y="0" width="2.4" height="2.4" fill="#1c8cb8"/><rect x="324" y="0" width="2.4" height="2.4" fill="#1c8cb8"/><rect x="334" y="0" width="2.4" height="2.4" fill="#1c8cb8"/><rect x="344" y="0" width="2.4" height="2.4" fill="#1c8cb8"/><rect x="354" y="0" width="2.4" height="2.4" fill="#1c8cb8"/><rect x="364" y="0" width="2.4" height="2.4" fill="#1c8cb8"/><rect x="374" y="0" width="2.4" height="2.4" fill="#1c8cb8"/><rect x="384" y="0" width="2.4" height="2.4" fill="#1c8cb8"/><rect x="394" y="0" width="2.4" height="2.4" fill="#1c8cb8"/><rect x="404" y="0" width="2.4" height="2.4" fill="#1c8cb8"/><rect x="414" y="0" width="2.4" height="2.4" fill="#1c8cb8"/><rect x="424" y="0" width="2.4" height="2.4" fill="#1c8cb8"/><rect x="434" y="0" width="2.4" height="2.4" fill="#1c8cb8"/><rect x="444" y="0" width="2.4" height="2.4" fill="#1c8cb8"/><rect x="454" y="0" width="2.4" height="2.4" fill="#1c8cb8"/><rect x="464" y="0" width="2.4" height="2.4" fill="#1c8cb8"/><rect x="474" y="0" width="2.4" height="2.4" fill="#1c8cb8"/><rect x="484" y="0" width="2.4" height="2.4" fill="#1c8cb8"/><rect x="494" y="0" width="2.4" height="2.4" fill="#1c8cb8"/><rect x="504" y="0" width="2.4" height="2.4" fill="#1c8cb8"/><rect x="514" y="0" width="2.4" height="2.4" fill="#1c8cb8"/><rect x="524" y="0" width="2.4" height="2.4" fill="#1c8cb8"/><rect x="534" y="0" width="2.4" height="2.4" fill="#1c8cb8"/><rect x="544" y="0" width="2.4" height="2.4" fill="#1c8cb8"/><rect x="554" y="0" width="2.4" height="2.4" fill="#1c8cb8"/><rect x="564" y="0" width="2.4" height="2.4" fill="#1c8cb8"/><rect x="574" y="0" width="2.4" height="2.4" fill="#1c8cb8"/><rect x="584" y="0" width="2.4" height="2.4" fill="#1c8cb8"/><rect x="594" y="0" width="2.4" height="2.4" fill="#1c8cb8"/><rect x="604" y="0" width="2.4" height="2.4" fill="#1c8cb8"/><rect x="614" y="0" width="2.4" height="2.4" fill="#1c8cb8"/><rect x="624" y="0" width="2.4" height="2.4" fill="#1c8cb8"/><rect x="634" y="0" width="2.4" height="2.4" fill="#1c8cb8"/><rect x="644" y="0" width="2.4" height="2.4" fill="#1c8cb8"/><rect x="654" y="0" width="2.4" height="2.4" fill="#1c8cb8"/><rect x="664" y="0" width="2.4" height="2.4" fill="#1c8cb8"/><rect x="674" y="0" width="2.4" height="2.4" fill="#1c8cb8"/><rect x="684" y="0" width="2.4" height="2.4" fill="#1c8cb8"/><rect x="694" y="0" width="2.4" height="2.4" fill="#1c8cb8"/><rect x="704" y="0" width="2.4" height="2.4" fill="#1c8cb8"/><rect x="714" y="0" width="2.4" height="2.4" fill="#1c8cb8"/><rect x="724" y="0" width="2.4" height="2.4" fill="#1c8cb8"/><rect x="734" y="0" width="2.4" height="2.4" fill="#1c8cb8"/><rect x="744" y="0" width="2.4" height="2.4" fill="#1c8cb8"/><rect x="754" y="0" width="2.4" height="2.4" fill="#1c8cb8"/><rect x="764" y="0" width="2.4" height="2.4" fill="#1c8cb8"/><rect x="774" y="0" width="2.4" height="2.4" fill="#1c8cb8"/><rect x="784" y="0" width="2.4" height="2.4" fill="#1c8cb8"/><rect x="794" y="0" width="2.4" height="2.4" fill="#1c8cb8"/><rect x="804" y="0" width="2.4" height="2.4" fill="#1c8cb8"/><rect x="814" y="0" width="2.4" height="2.4" fill="#1c8cb8"/><rect x="824" y="0" width="2.4" height="2.4" fill="#1c8cb8"/><rect x="834" y="0" width="2.4" height="2.4" fill="#1c8cb8"/><rect x="844" y="0" width="2.4" height="2.4" fill="#1c8cb8"/><rect x="854" y="0" width="2.4" height="2.4" fill="#1c8cb8"/><rect x="864" y="0" width="2.4" height="2.4" fill="#1c8cb8"/><rect x="874" y="0" width="2.4" height="2.4" fill="#1c8cb8"/><rect x="884" y="0" width="2.4" height="2.4" fill="#1c8cb8"/><rect x="894" y="0" width="2.4" height="2.4" fill="#1c8cb8"/><rect x="904" y="0" width="2.4" height="2.4" fill="#1c8cb8"/><rect x="914" y="0" width="2.4" height="2.4" fill="#1c8cb8"/></svg>
<div class="t" style="left:543.00px;top:105.74px;font-size:16px;color:#222;font-weight:400;font-family:'Liberation Mono', monospace;letter-spacing:0.4px">Name</div>
<div style="position:absolute;left:366px;top:127px;width:1191px;height:631px;background:#fcfcfc;"></div>
<div style="position:absolute;left:366px;top:127px;width:22px;height:631px;background:#f0f0f0;"></div>
<div style="position:absolute;left:388px;top:127px;width:45px;height:631px;background:#eceef4;"></div>
<div style="position:absolute;left:433px;top:127px;width:10px;height:631px;background:#ffffff;"></div>
<div style="position:absolute;left:443px;top:127px;width:1114px;height:33px;background:#f7f7f7;"></div>
<div style="position:absolute;left:443px;top:194px;width:1114px;height:34px;background:#f7f7f7;"></div>
<div style="position:absolute;left:443px;top:262px;width:1114px;height:33px;background:#f7f7f7;"></div>
<div style="position:absolute;left:443px;top:329px;width:1114px;height:34px;background:#f7f7f7;"></div>
<div style="position:absolute;left:443px;top:397px;width:1114px;height:34px;background:#f7f7f7;"></div>
<div style="position:absolute;left:443px;top:464px;width:1114px;height:34px;background:#f7f7f7;"></div>
<div style="position:absolute;left:443px;top:532px;width:1114px;height:34px;background:#f7f7f7;"></div>
<div style="position:absolute;left:443px;top:600px;width:1114px;height:33px;background:#f7f7f7;"></div>
<div style="position:absolute;left:443px;top:667px;width:1114px;height:34px;background:#f7f7f7;"></div>
<div style="position:absolute;left:443px;top:735px;width:1114px;height:23px;background:#f7f7f7;"></div>
<div style="position:absolute;left:443.5px;top:434px;width:919.5px;height:264px;background:#e3e9f3;border-radius:4px;"></div>
<div style="position:absolute;left:603px;top:435px;width:370px;height:26px;background:#d0d7ea;border-radius:4px;"></div>
<div style="position:absolute;left:1194px;top:435px;width:89px;height:26px;background:#d0d7ea;border-radius:4px;"></div>
<div style="position:absolute;left:633px;top:469px;width:340px;height:26px;background:#d0d7ea;border-radius:4px;"></div>
<div style="position:absolute;left:1213px;top:469px;width:90px;height:26px;background:#d0d7ea;border-radius:4px;"></div>
<div style="position:absolute;left:693px;top:571px;width:100px;height:26px;background:#d0d7ea;border-radius:4px;"></div>
<div style="position:absolute;left:893px;top:571px;width:60px;height:26px;background:#d0d7ea;border-radius:4px;"></div>
<div style="position:absolute;left:693px;top:604px;width:100px;height:26px;background:#d0d7ea;border-radius:4px;"></div>
<div style="position:absolute;left:893px;top:604px;width:60px;height:26px;background:#d0d7ea;border-radius:4px;"></div>
<div style="position:absolute;left:365px;top:127px;width:1192px;height:631px;overflow:hidden">
<div class="t" style="left:56.00px;top:11.14px;font-size:16px;color:#34466a;font-weight:400;font-family:'Liberation Mono', monospace;letter-spacing:0.4px">1</div>
<div class="t" style="left:368.00px;top:11.14px;font-size:16px;color:#1c1c1c;font-weight:400;font-family:'Liberation Mono', monospace;letter-spacing:0.4px">TRANSCRIPT OF UNIVERSITY RECORDS</div>
<div class="t" style="left:56.00px;top:44.94px;font-size:16px;color:#34466a;font-weight:400;font-family:'Liberation Mono', monospace;letter-spacing:0.4px">2</div>
<div class="t" style="left:498.00px;top:44.94px;font-size:16px;color:#1c1c1c;font-weight:400;font-family:'Liberation Mono', monospace;letter-spacing:0.4px">(dd.mm.yy)</div>
<div class="t" style="left:56.00px;top:78.74px;font-size:16px;color:#34466a;font-weight:400;font-family:'Liberation Mono', monospace;letter-spacing:0.4px">3</div>
<div class="t" style="left:78.00px;top:78.74px;font-size:16px;color:#1c1c1c;font-weight:400;font-family:'Liberation Mono', monospace;letter-spacing:0.4px">ABC University</div>
<div class="t" style="left:56.00px;top:112.54px;font-size:16px;color:#34466a;font-weight:400;font-family:'Liberation Mono', monospace;letter-spacing:0.4px">4</div>
<div class="t" style="left:78.00px;top:112.54px;font-size:16px;color:#1c1c1c;font-weight:400;font-family:'Liberation Mono', monospace;letter-spacing:0.4px">Student Affairs Office</div>
<div class="t" style="left:56.00px;top:146.34px;font-size:16px;color:#34466a;font-weight:400;font-family:'Liberation Mono', monospace;letter-spacing:0.4px">5</div>
<div class="t" style="left:78.00px;top:146.34px;font-size:16px;color:#1c1c1c;font-weight:400;font-family:'Liberation Mono', monospace;letter-spacing:0.4px">123 Street,</div>
<div class="t" style="left:56.00px;top:180.14px;font-size:16px;color:#34466a;font-weight:400;font-family:'Liberation Mono', monospace;letter-spacing:0.4px">6</div>
<div class="t" style="left:78.00px;top:180.14px;font-size:16px;color:#1c1c1c;font-weight:400;font-family:'Liberation Mono', monospace;letter-spacing:0.4px">70245 Dataville,</div>
<div class="t" style="left:56.00px;top:213.94px;font-size:16px;color:#34466a;font-weight:400;font-family:'Liberation Mono', monospace;letter-spacing:0.4px">7</div>
<div class="t" style="left:78.00px;top:213.94px;font-size:16px;color:#1c1c1c;font-weight:400;font-family:'Liberation Mono', monospace;letter-spacing:0.4px">Dataland, AT</div>
<div class="t" style="left:56.00px;top:247.74px;font-size:16px;color:#34466a;font-weight:400;font-family:'Liberation Mono', monospace;letter-spacing:0.4px">8</div>
<div class="t" style="left:56.00px;top:281.54px;font-size:16px;color:#34466a;font-weight:400;font-family:'Liberation Mono', monospace;letter-spacing:0.4px">9</div>
<div class="t" style="left:46.00px;top:315.34px;font-size:16px;color:#34466a;font-weight:400;font-family:'Liberation Mono', monospace;letter-spacing:0.4px">10</div>
<div class="t" style="left:78.00px;top:315.34px;font-size:16px;color:#1c1c1c;font-weight:400;font-family:'Liberation Mono', monospace;letter-spacing:0.4px">Student’s Name:</div>
<div class="t" style="left:238.00px;top:315.34px;font-size:16px;color:#45527a;font-weight:400;font-family:'Liberation Mono', monospace;letter-spacing:0.4px">Filip Haney</div>
<div class="t" style="left:678.00px;top:315.34px;font-size:16px;color:#1c1c1c;font-weight:400;font-family:'Liberation Mono', monospace;letter-spacing:0.4px">Student Number:</div>
<div class="t" style="left:838.00px;top:315.34px;font-size:16px;color:#45527a;font-weight:400;font-family:'Liberation Mono', monospace;letter-spacing:0.4px">00020</div>
<div class="t" style="left:46.00px;top:349.14px;font-size:16px;color:#34466a;font-weight:400;font-family:'Liberation Mono', monospace;letter-spacing:0.4px">11</div>
<div class="t" style="left:78.00px;top:349.14px;font-size:16px;color:#1c1c1c;font-weight:400;font-family:'Liberation Mono', monospace;letter-spacing:0.4px">Student’s Address:</div>
<div class="t" style="left:268.00px;top:349.14px;font-size:16px;color:#45527a;font-weight:400;font-family:'Liberation Mono', monospace;letter-spacing:0.4px">504 Neri Rd., Bakstow 24717</div>
<div class="t" style="left:628.00px;top:349.14px;font-size:16px;color:#1c1c1c;font-weight:400;font-family:'Liberation Mono', monospace;letter-spacing:0.4px">Date of Registration:</div>
<div class="t" style="left:848.00px;top:349.14px;font-size:16px;color:#45527a;font-weight:400;font-family:'Liberation Mono', monospace;letter-spacing:0.4px">28-02-23</div>
<div class="t" style="left:46.00px;top:382.94px;font-size:16px;color:#34466a;font-weight:400;font-family:'Liberation Mono', monospace;letter-spacing:0.4px">12</div>
<div class="t" style="left:78.00px;top:382.94px;font-size:16px;color:#1c1c1c;font-weight:400;font-family:'Liberation Mono', monospace;letter-spacing:0.4px">Registration for the Current Academic Year</div>
<div class="t" style="left:46.00px;top:416.74px;font-size:16px;color:#34466a;font-weight:400;font-family:'Liberation Mono', monospace;letter-spacing:0.4px">13</div>
<div class="t" style="left:78.00px;top:416.74px;font-size:16px;color:#1c1c1c;font-weight:400;font-family:'Liberation Mono', monospace;letter-spacing:0.4px">Term</div>
<div class="t" style="left:328.00px;top:416.74px;font-size:16px;color:#1c1c1c;font-weight:400;font-family:'Liberation Mono', monospace;letter-spacing:0.4px">Status</div>
<div class="t" style="left:528.00px;top:416.74px;font-size:16px;color:#1c1c1c;font-weight:400;font-family:'Liberation Mono', monospace;letter-spacing:0.4px">Member of Student Union</div>
<div class="t" style="left:46.00px;top:450.54px;font-size:16px;color:#34466a;font-weight:400;font-family:'Liberation Mono', monospace;letter-spacing:0.4px">14</div>
<div class="t" style="left:78.00px;top:450.54px;font-size:16px;color:#1c1c1c;font-weight:400;font-family:'Liberation Mono', monospace;letter-spacing:0.4px">Fall 2023</div>
<div class="t" style="left:328.00px;top:450.54px;font-size:16px;color:#45527a;font-weight:400;font-family:'Liberation Mono', monospace;letter-spacing:0.4px">Attending</div>
<div class="t" style="left:528.00px;top:450.54px;font-size:16px;color:#45527a;font-weight:400;font-family:'Liberation Mono', monospace;letter-spacing:0.4px">Yes</div>
<div class="t" style="left:46.00px;top:484.34px;font-size:16px;color:#34466a;font-weight:400;font-family:'Liberation Mono', monospace;letter-spacing:0.4px">15</div>
<div class="t" style="left:78.00px;top:484.34px;font-size:16px;color:#1c1c1c;font-weight:400;font-family:'Liberation Mono', monospace;letter-spacing:0.4px">Spring 2024</div>
<div class="t" style="left:328.00px;top:484.34px;font-size:16px;color:#45527a;font-weight:400;font-family:'Liberation Mono', monospace;letter-spacing:0.4px">Attending</div>
<div class="t" style="left:528.00px;top:484.34px;font-size:16px;color:#45527a;font-weight:400;font-family:'Liberation Mono', monospace;letter-spacing:0.4px">Yes</div>
<div class="t" style="left:46.00px;top:518.14px;font-size:16px;color:#34466a;font-weight:400;font-family:'Liberation Mono', monospace;letter-spacing:0.4px">16</div>
<div class="t" style="left:78.00px;top:518.14px;font-size:16px;color:#1c1c1c;font-weight:400;font-family:'Liberation Mono', monospace;letter-spacing:0.4px">DEGREE INFORMATION</div>
<div class="t" style="left:46.00px;top:551.94px;font-size:16px;color:#34466a;font-weight:400;font-family:'Liberation Mono', monospace;letter-spacing:0.4px">17</div>
<div class="t" style="left:78.00px;top:551.94px;font-size:16px;color:#1c1c1c;font-weight:400;font-family:'Liberation Mono', monospace;letter-spacing:0.4px">Degree Type: Masters</div>
<div class="t" style="left:448.00px;top:551.94px;font-size:16px;color:#1c1c1c;font-weight:400;font-family:'Liberation Mono', monospace;letter-spacing:0.4px">Degree Name: MA Psychology</div>
<div class="t" style="left:46.00px;top:585.74px;font-size:16px;color:#34466a;font-weight:400;font-family:'Liberation Mono', monospace;letter-spacing:0.4px">18</div>
<div class="t" style="left:78.00px;top:585.74px;font-size:16px;color:#1c1c1c;font-weight:400;font-family:'Liberation Mono', monospace;letter-spacing:0.4px">Completed Courses</div>
<div class="t" style="left:46.00px;top:619.54px;font-size:16px;color:#34466a;font-weight:400;font-family:'Liberation Mono', monospace;letter-spacing:0.4px">19</div>
<div class="t" style="left:448.00px;top:619.54px;font-size:16px;color:#1c1c1c;font-weight:400;font-family:'Liberation Mono', monospace;letter-spacing:0.4px">Cr.Hr</div>
<div class="t" style="left:588.00px;top:619.54px;font-size:16px;color:#1c1c1c;font-weight:400;font-family:'Liberation Mono', monospace;letter-spacing:0.4px">Grade</div>
<div class="t" style="left:748.00px;top:619.54px;font-size:16px;color:#1c1c1c;font-weight:400;font-family:'Liberation Mono', monospace;letter-spacing:0.4px">Date</div>
<div class="t" style="left:898.00px;top:619.54px;font-size:16px;color:#1c1c1c;font-weight:400;font-family:'Liberation Mono', monospace;letter-spacing:0.4px">Examiner</div>
</div>
<div style="position:absolute;left:1557px;top:127px;width:20px;height:631px;background:#f0f0f0;"></div>
<svg style="position:absolute;left:1558px;top:129px;" width="16" height="18" viewBox="0 0 16 18"><path d="M1 8 H15 M1 11 H15" stroke="#1a1a1a" stroke-width="1.8"/><path d="M8 2 V7 M8 12 V16" stroke="#222" stroke-width="1.4"/><path d="M5.5 4 L8 1 L10.5 4Z M5.5 14 L8 17 L10.5 14Z" fill="#222"/></svg>
<svg style="position:absolute;left:1559px;top:155px;" width="14" height="10" viewBox="0 0 14 10"><path d="M2.5 8 L7 3.5 L11.5 8" stroke="#505050" stroke-width="2.6" fill="none"/></svg>
<div style="position:absolute;left:1557px;top:170px;width:18px;height:283px;background:#cecece;"></div>
<svg style="position:absolute;left:1559px;top:741px;" width="14" height="10" viewBox="0 0 14 10"><path d="M2.5 2 L7 6.5 L11.5 2" stroke="#505050" stroke-width="2.6" fill="none"/></svg>
<div style="position:absolute;left:366px;top:758px;width:1211px;height:19px;background:#f0f0f0;"></div>
<svg style="position:absolute;left:370px;top:762px;" width="10" height="12" viewBox="0 0 10 12"><path d="M7 2 L3 6 L7 10" stroke="#b0b0b0" stroke-width="1.6" fill="none"/></svg>
<svg style="position:absolute;left:1540px;top:762px;" width="10" height="12" viewBox="0 0 10 12"><path d="M3 2 L7 6 L3 10" stroke="#b0b0b0" stroke-width="1.6" fill="none"/></svg>
<div style="position:absolute;left:364px;top:777px;width:1214px;height:1px;background:#a8a8a8;"></div>
<div style="position:absolute;left:1577px;top:98px;width:1px;height:680px;background:#a8a8a8;"></div>
<div style="position:absolute;left:365px;top:778px;width:1214px;height:30px;background:#eeeff4;"></div>
<div style="position:absolute;left:363px;top:808px;width:1216px;height:3px;background:#dde0e5;"></div>
<div style="position:absolute;left:1066px;top:782px;width:157px;height:25px;background:#f7f8fa;border:1px solid #cfd3d8;border-right-color:#e8eaee;box-sizing:border-box;"></div>
<div class="t" style="left:1068.25px;top:788.30px;font-size:15px;color:#3a2ee0;font-weight:400;font-family:'Liberation Sans', sans-serif;letter-spacing:-0.150px;">SampleTranscript4.pdf</div>
<div style="position:absolute;left:1226px;top:783px;width:1px;height:24px;background:#9aa0a8;"></div>
<div class="t" style="left:1229.25px;top:788.30px;font-size:15px;color:#333;font-weight:400;font-family:'Liberation Sans', sans-serif;letter-spacing:-0.295px;">Line:</div>
<div class="t" style="left:1275.00px;top:788.64px;font-size:14.6px;color:#222;font-weight:700;font-family:'Liberation Sans', sans-serif;">1</div>
<div style="position:absolute;left:1288px;top:783px;width:1px;height:24px;background:#9aa0a8;"></div>
<div class="t" style="left:1291.25px;top:788.30px;font-size:15px;color:#333;font-weight:400;font-family:'Liberation Sans', sans-serif;letter-spacing:-0.112px;">Col:</div>
<div class="t" style="left:1332.00px;top:788.64px;font-size:14.6px;color:#222;font-weight:700;font-family:'Liberation Sans', sans-serif;">0</div>
<div style="position:absolute;left:1349px;top:783px;width:1px;height:24px;background:#9aa0a8;"></div>
<div class="t" style="left:1353.25px;top:788.30px;font-size:15px;color:#333;font-weight:400;font-family:'Liberation Sans', sans-serif;letter-spacing:-0.463px;">Page:</div>
<div class="t" style="left:1399.25px;top:788.30px;font-size:15px;color:#222;font-weight:700;font-family:'Liberation Sans', sans-serif;letter-spacing:0.541px;">1 / 1</div>
<div style="position:absolute;left:1439px;top:783px;width:1px;height:24px;background:#9aa0a8;"></div>
<svg style="position:absolute;left:1445px;top:786px;" width="20" height="20" viewBox="0 0 20 20"><circle cx="7.5" cy="7.5" r="5.5" fill="none" stroke="#333" stroke-width="1.8"/><path d="M11.5 11.5 L17 17" stroke="#333" stroke-width="2.6"/><path d="M4.5 7.5 H10.5" stroke="#333" stroke-width="1.6"/></svg>
<svg style="position:absolute;left:1474px;top:786px;" width="20" height="20" viewBox="0 0 20 20"><circle cx="7.5" cy="7.5" r="5.5" fill="none" stroke="#333" stroke-width="1.8"/><path d="M11.5 11.5 L17 17" stroke="#333" stroke-width="2.6"/><path d="M4.5 7.5 H10.5 M7.5 4.5 V10.5" stroke="#333" stroke-width="1.6"/></svg>
<div style="position:absolute;left:1500px;top:783px;width:44px;height:24px;background:#ffffff;"></div>
<div class="t" style="left:1504.25px;top:788.30px;font-size:15px;color:#333;font-weight:400;font-family:'Liberation Sans', sans-serif;letter-spacing:-0.675px;">100%</div>
<svg style="position:absolute;left:1546px;top:793px;" width="8" height="6" viewBox="0 0 8 6"><path d="M0.5 0.5 H7.5 L4 5Z" fill="#222"/></svg>
<div style="position:absolute;left:1585px;top:3px;width:320px;height:808px;background:#e1e8ef;"></div>
<div style="position:absolute;left:1585px;top:3px;width:2px;height:808px;background:#dfe3e7;"></div>
<div class="t" style="left:1590.23px;top:15.76px;font-size:15.4px;color:#444;font-weight:400;font-family:'Liberation Sans', sans-serif;letter-spacing:-0.376px;">Region Properties</div>
<svg style="position:absolute;left:1854px;top:21px;" width="10" height="7" viewBox="0 0 10 7"><path d="M0 0.5 H9.5 L4.75 6.2Z" fill="#1e1e1e"/></svg>
<svg style="position:absolute;left:1872px;top:17.5px;" width="10" height="12" viewBox="0 0 10 12"><rect x="1.6" y="0.8" width="5.6" height="5.8" fill="none" stroke="#1e1e1e" stroke-width="1.6"/><path d="M5.2 1.2 V6.5" stroke="#1e1e1e" stroke-width="1.4"/><path d="M0 7 H9" stroke="#1e1e1e" stroke-width="1.6"/><path d="M4.5 7.5 V11.5" stroke="#333" stroke-width="1.2"/></svg>
<svg style="position:absolute;left:1889px;top:18.5px;" width="11" height="11" viewBox="0 0 11 11"><path d="M1.4 1.4 L9.6 9.6 M9.6 1.4 L1.4 9.6" stroke="#1e1e1e" stroke-width="2.5" stroke-linecap="round"/></svg>
<div style="position:absolute;left:1587px;top:45px;width:317px;height:45px;background:#f1f4f8;"></div>
<svg style="position:absolute;left:1599px;top:60px;" width="24" height="20" viewBox="0 0 24 20">
<path d="M2 2 H22 V18 H2Z" fill="none" stroke="#2e86d8" stroke-width="1" stroke-dasharray="2 1.5"/>
<path d="M2 2 H18 L10 10 L18 18 H2Z" fill="#f6a020"/>
<path d="M17 10 H9 M12 6.5 L8.5 10 L12 13.5" stroke="#2e86d8" stroke-width="2.4" fill="none"/>
</svg>
<svg style="position:absolute;left:1637px;top:60px;" width="24" height="20" viewBox="0 0 24 20">
<path d="M2 2 H22 V18 H2Z" fill="none" stroke="#2e86d8" stroke-width="1" stroke-dasharray="2 1.5"/>
<path d="M22 2 H6 L14 10 L6 18 H22Z" fill="#f6a020"/>
<path d="M7 10 H15 M12 6.5 L15.5 10 L12 13.5" stroke="#2e86d8" stroke-width="2.4" fill="none"/>
</svg>
<div style="position:absolute;left:1671px;top:55px;width:1px;height:29px;background:#d3d7dc;"></div>
<svg style="position:absolute;left:1681px;top:60px;" width="26" height="22" viewBox="0 0 26 22">
<path d="M8 13 H2 V2 H24 V13 H17" stroke="#2e86d8" stroke-width="2.6" fill="none"/>
<path d="M15 6 L9 14 H13 L10 21 L18 11 H14 L17 6Z" fill="#f6a020"/>
</svg>
<div style="position:absolute;left:1716px;top:55px;width:1px;height:29px;background:#d3d7dc;"></div>
<svg style="position:absolute;left:1726px;top:60px;" width="26" height="22" viewBox="0 0 26 22">
<rect x="1" y="1" width="7" height="5" fill="#f6a020"/><rect x="1" y="7.5" width="7" height="5" fill="#f6a020"/><rect x="1" y="14" width="7" height="6" fill="#f6a020"/>
<path d="M9 10 H15" stroke="#f6a020" stroke-width="1.5"/><path d="M14 8 L16 10 L14 12Z" fill="#f6a020"/>
<rect x="17" y="7" width="8" height="6" fill="#2e86d8"/>
</svg>
<div style="position:absolute;left:1761px;top:55px;width:1px;height:29px;background:#d3d7dc;"></div>
<svg style="position:absolute;left:1770px;top:60px;" width="28" height="22" viewBox="0 0 28 22">
<path d="M10 3 H26 V13 H21" stroke="#f6a020" stroke-width="2.4" fill="none"/>
<rect x="1" y="2" width="3" height="12" fill="#f6a020"/>
<path d="M3 8 H11" stroke="#222" stroke-width="1.8"/><path d="M9 5.5 L12 8 L9 10.5Z" fill="#222"/>
<path d="M18 7 L12 14 H16 L13 21 L21 12 H17 L20 7Z" fill="#2e86d8"/>
</svg>
<svg style="position:absolute;left:1809px;top:59px;" width="26" height="24" viewBox="0 0 26 24"><path d="M4 3.5 L21 20.5 M21 3.5 L4 20.5" stroke="#d44a2a" stroke-width="4.4" stroke-linecap="square"/></svg>
<div style="position:absolute;left:1587px;top:90px;width:317px;height:661px;background:#ffffff;"></div>
<div style="position:absolute;left:1598px;top:107px;width:320px;height:335px;background:#ffffff;border:1px solid #e3e6ea;border-radius:6px;box-sizing:border-box;"></div>
<div style="position:absolute;left:1599px;top:108px;width:310px;height:35px;background:linear-gradient(#f4f7fa,#ffffff);border-radius:5px 0 0 0;"></div>
<div style="position:absolute;left:1599px;top:143px;width:310px;height:1px;background:#e6e9ec;"></div>
<div class="t" style="left:1619.01px;top:118.72px;font-size:13.8px;color:#111;font-weight:700;font-family:'Liberation Sans', sans-serif;letter-spacing:-0.177px;">Region Details</div>
<div class="t" style="left:1608.00px;top:164.15px;font-size:14px;color:#3a3a3a;font-weight:400;font-family:'Liberation Sans', sans-serif;letter-spacing:0.055px;">Region Name</div>
<div style="position:absolute;left:1734px;top:158px;width:180px;height:27px;background:#ffffff;border:1px solid #e3e3e3;box-sizing:border-box;"></div>
<div class="t" style="left:1737.90px;top:163.65px;font-size:14px;color:#111;font-weight:400;font-family:'Liberation Sans', sans-serif;letter-spacing:0.545px;">StudentInformation</div>
<div class="t" style="left:1608.00px;top:197.15px;font-size:14px;color:#3a3a3a;font-weight:400;font-family:'Liberation Sans', sans-serif;letter-spacing:0.020px;">Region Type</div>
<div class="t" style="left:1736.90px;top:197.15px;font-size:14px;color:#222;font-weight:400;font-family:'Liberation Sans', sans-serif;letter-spacing:0.161px;">Data</div>
<div class="t" style="left:1608.00px;top:238.15px;font-size:14px;color:#3a3a3a;font-weight:400;font-family:'Liberation Sans', sans-serif;letter-spacing:0.022px;">Region End Type</div>
<div style="position:absolute;left:1734px;top:231px;width:180px;height:27px;background:#ffffff;border:1px solid #e3e3e3;box-sizing:border-box;"></div>
<div class="t" style="left:1738.70px;top:238.15px;font-size:14px;color:#111;font-weight:400;font-family:'Liberation Sans', sans-serif;letter-spacing:0.327px;">Line Count</div>
<div class="t" style="left:1609.30px;top:272.15px;font-size:14px;color:#3a3a3a;font-weight:400;font-family:'Liberation Sans', sans-serif;letter-spacing:0.271px;">Line Count</div>
<div style="position:absolute;left:1734px;top:264px;width:180px;height:27px;background:#ffffff;border:1px solid #e3e3e3;box-sizing:border-box;"></div>
<div class="t" style="left:1737.00px;top:269.99px;font-size:13px;color:#111;font-weight:400;font-family:'Liberation Sans', sans-serif;">8</div>
<div style="position:absolute;left:1611px;top:373px;width:15px;height:15px;background:#ffffff;border:1px solid #333;box-sizing:border-box;"></div>
<div class="t" style="left:1634.30px;top:374.15px;font-size:14px;color:#3a3a3a;font-weight:400;font-family:'Liberation Sans', sans-serif;letter-spacing:0.393px;">Overlapping Container</div>
<div style="position:absolute;left:1611px;top:404px;width:15px;height:15px;background:#ffffff;border:1px solid #333;box-sizing:border-box;"></div>
<div class="t" style="left:1634.30px;top:405.15px;font-size:14px;color:#3a3a3a;font-weight:400;font-family:'Liberation Sans', sans-serif;letter-spacing:0.313px;">Container Region</div>
<div style="position:absolute;left:1587px;top:751px;width:317px;height:19px;background:#f0f0f0;"></div>
<div style="position:absolute;left:1608px;top:751px;width:213px;height:19px;background:#c8c8c8;"></div>
<svg style="position:absolute;left:1591px;top:754px;" width="12" height="14" viewBox="0 0 12 14"><path d="M8 2 L3 7 L8 12" stroke="#444" stroke-width="2.2" fill="none"/></svg>
<svg style="position:absolute;left:1887px;top:754px;" width="12" height="14" viewBox="0 0 12 14"><path d="M4 2 L9 7 L4 12" stroke="#444" stroke-width="2.2" fill="none"/></svg>
<div style="position:absolute;left:1587px;top:771px;width:317px;height:40px;background:#e0e7ef;"></div>
<div style="position:absolute;left:1692px;top:773px;width:106px;height:38px;background:#d5d9de;"></div>
<div class="t" style="left:1592.25px;top:784.30px;font-size:15px;color:#2a2a2a;font-weight:400;font-family:'Liberation Sans', sans-serif;letter-spacing:-0.157px;">Project Expl...</div>
<div class="t" style="left:1699.25px;top:784.30px;font-size:15px;color:#2a2a2a;font-weight:400;font-family:'Liberation Sans', sans-serif;letter-spacing:-0.234px;">Report Prop...</div>
<div class="t" style="left:1804.25px;top:784.30px;font-size:15px;color:#2a2a2a;font-weight:400;font-family:'Liberation Sans', sans-serif;letter-spacing:-0.359px;">Server Explo...</div>
<div style="position:absolute;left:1905px;top:3px;width:7px;height:813px;background:#f2f5f8;"></div>
<div style="position:absolute;left:1585px;top:811px;width:320px;height:5px;background:#f0f0f0;"></div>
</body></html>
